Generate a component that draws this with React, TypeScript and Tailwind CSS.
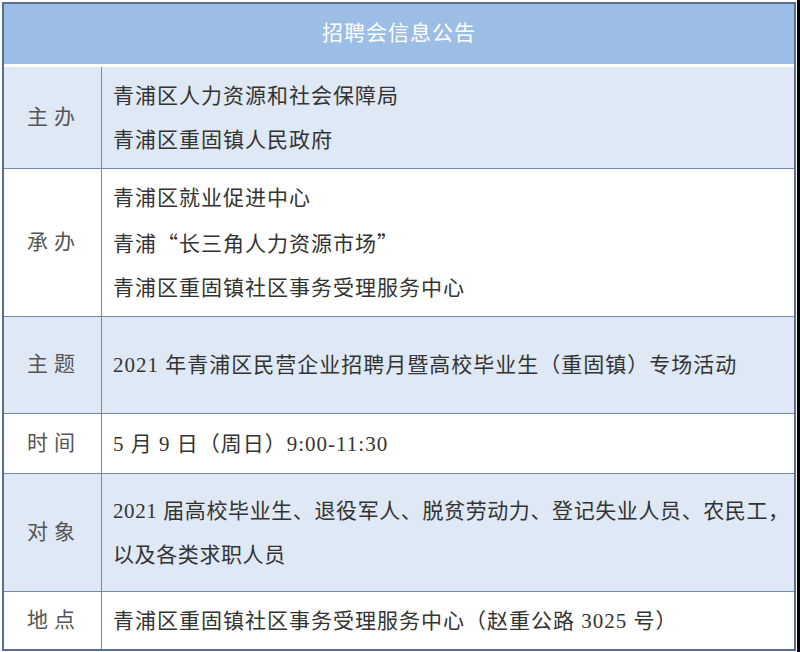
import React from "react";

const font = { fontFamily: "'Liberation Serif', 'Noto Sans CJK SC', serif" };
const cjk = { fontFamily: "'Noto Sans CJK SC', sans-serif" };

type Row = { label: string; lines: React.ReactNode[]; h: string; bg: string; track?: string };

const rows: Row[] = [
  { label: "主办", lines: ["青浦区人力资源和社会保障局", "青浦区重固镇人民政府"], h: "h-[102px]", bg: "bg-[#dfe8f5]" },
  {
    label: "承办",
    lines: [
      "青浦区就业促进中心",
      <>
        青浦<span style={cjk}>“</span>长三角人力资源市场<span style={cjk}>”</span>
      </>,
      "青浦区重固镇社区事务受理服务中心",
    ],
    h: "h-[148px]",
    bg: "bg-white",
  },
  { label: "主题", lines: ["2021 年青浦区民营企业招聘月暨高校毕业生（重固镇）专场活动"], h: "h-[97px]", bg: "bg-[#dfe8f5]" },
  { label: "时间", lines: ["5 月 9 日（周日）9:00-11:30"], h: "h-[60px]", bg: "bg-white" },
  {
    label: "对象",
    lines: ["2021 届高校毕业生、退役军人、脱贫劳动力、登记失业人员、农民工，", "以及各类求职人员"],
    h: "h-[118px]",
    bg: "bg-[#dfe8f5]",
    track: "tracking-[0.6px]",
  },
  { label: "地点", lines: ["青浦区重固镇社区事务受理服务中心（赵重公路 3025 号）"], h: "h-[57px]", bg: "bg-white" },
];

export default function App() {
  return (
    <div className="w-[800px] h-[652px] bg-white border-r-[3px] border-black pt-[2px] pl-[2px]" style={font}>
      <div className="w-[794px] border-2 border-[#5a6e90] bg-white">
        <div className="h-[60px] bg-[#9cbee4] flex items-center justify-center text-white text-[21px] tracking-[1px]">
          招聘会信息公告
        </div>
        <div className="h-[3px] bg-white" />
        {rows.map((r, i) => (
          <div
            key={r.label}
            className={`flex ${r.h} ${r.bg} ${i < rows.length - 1 ? "border-b border-[#7189ab]" : ""}`}
          >
            <div className="w-[98px] shrink-0 border-r border-[#7189ab] flex items-center pl-[23px] text-[21px] text-[#555] tracking-[6px]">
              {r.label}
            </div>
            <div
              className={`flex-1 flex flex-col justify-center pl-[11px] text-[21px] leading-[44px] text-[#333] ${
                r.track ?? "tracking-[1px]"
              }`}
            >
              {r.lines.map((l, j) => (
                <div key={j} className="whitespace-nowrap">
                  {l}
                </div>
              ))}
            </div>
          </div>
        ))}
      </div>
    </div>
  );
}
